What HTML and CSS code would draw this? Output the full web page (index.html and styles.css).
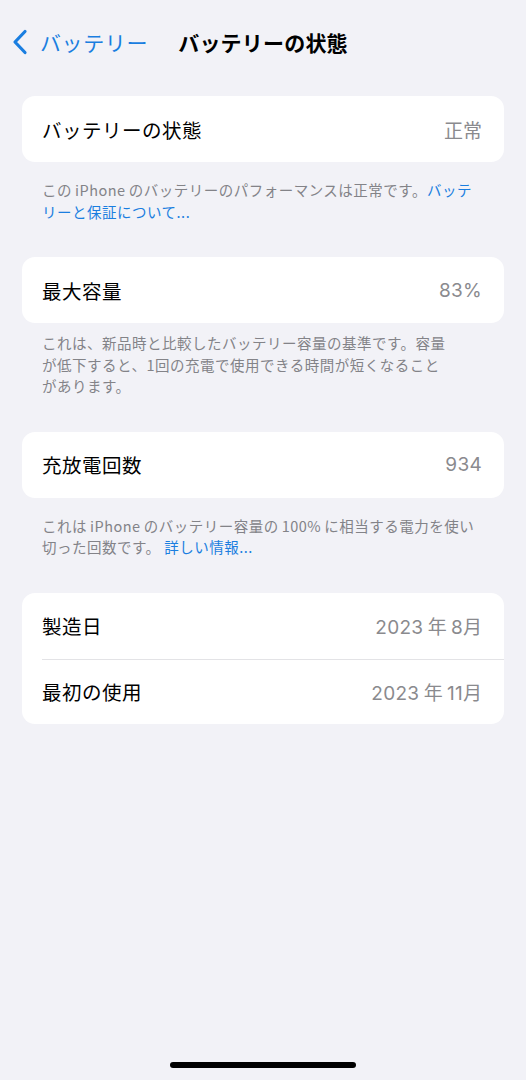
FILE: index.html
```html
<!DOCTYPE html>
<html lang="ja">
<head>
<meta charset="utf-8">
<title>バッテリーの状態</title>
<link rel="stylesheet" href="styles.css">
</head>
<body>
<div class="screen">
  <header class="nav">
    <a class="back" href="#">
      <svg class="chevron" width="16" height="26" viewBox="0 0 16 26" aria-hidden="true">
        <path d="M13 2.5 L3 13 L13 23.5" fill="none" stroke="currentColor" stroke-width="3.2" stroke-linecap="round" stroke-linejoin="round"/>
      </svg>
      <span class="back-label">バッテリー</span>
    </a>
    <h1 class="title">バッテリーの状態</h1>
    <span class="nav-spacer"></span>
  </header>

  <main class="content">
    <section class="group">
      <div class="card">
        <div class="row"><span class="label">バッテリーの状態</span><span class="value">正常</span></div>
      </div>
      <p class="footer">この<span class="latin">iPhone</span>のバッテリーのパフォーマンスは正常です。<a class="link" href="#">バッテ<br>リーと保証について...</a></p>
    </section>

    <section class="group">
      <div class="card">
        <div class="row"><span class="label">最大容量</span><span class="value num">83%</span></div>
      </div>
      <p class="footer footer-tight">これは、新品時と比較したバッテリー容量の基準です。容量<br>が低下すると、1回の充電で使用できる時間が短くなること<br>があります。</p>
    </section>

    <section class="group">
      <div class="card">
        <div class="row"><span class="label">充放電回数</span><span class="value num">934</span></div>
      </div>
      <p class="footer">これは<span class="latin">iPhone</span>のバッテリー容量の<span class="latin">100%</span>に相当する電力を使い<br>切った回数です。 <a class="link" href="#">詳しい情報...</a></p>
    </section>

    <section class="group">
      <div class="card">
        <div class="row"><span class="label">製造日</span><span class="value"><span class="num">2023</span> 年 <span class="num">8</span>月</span></div>
        <div class="row"><span class="label">最初の使用</span><span class="value"><span class="num">2023</span> 年 <span class="num">11</span>月</span></div>
      </div>
    </section>
  </main>

  <div class="home-bar"><span class="home-indicator"></span></div>
</div>
</body>
</html>
```

FILE: styles.css
```css
html, body {
  margin: 0;
  padding: 0;
}

body {
  background: #f2f2f7;
  font-family: "Noto Sans CJK JP", "Noto Sans", sans-serif;
  color: #000;
}

.screen {
  display: flex;
  flex-direction: column;
  height: 1080px;
}

/* navigation bar */
.nav {
  display: grid;
  grid-template-columns: 1fr auto 1fr;
  align-items: center;
  height: 84px;
}

.back {
  display: flex;
  align-items: center;
  gap: 12px;
  padding-left: 12px;
  color: #1a7ee0;
  text-decoration: none;
  font-size: 21px;
}

.chevron {
  display: block;
  color: #1a7ee0;
}

.back-label {
  line-height: 1;
  letter-spacing: 0.6px;
}

.title {
  margin: 0;
  font-size: 21px;
  font-weight: 700;
  letter-spacing: 0.2px;
  line-height: 1;
}

/* list groups */
.content {
  display: flex;
  flex-direction: column;
  gap: 35px;
  padding: 12px 22px 0;
  flex: 1;
}

.card {
  background: #fff;
  border-radius: 13px;
  overflow: hidden;
}

.row {
  display: flex;
  align-items: center;
  justify-content: space-between;
  height: 66px;
  padding: 0 22px 0 20px;
  position: relative;
}

.row + .row::before {
  content: "";
  position: absolute;
  top: 0;
  left: 20px;
  right: 0;
  height: 1px;
  background: #e3e3e6;
}

.row + .row {
  height: 65px;
}

.label {
  font-size: 19.5px;
  letter-spacing: 0.5px;
}

.value {
  font-size: 19px;
  color: #8a8a8e;
}

.num {
  font-family: Inter, "Noto Sans", sans-serif;
  font-size: 19px;
  letter-spacing: 0.3px;
}

.footer {
  margin: 0;
  padding: 17px 20px 0;
  font-size: 14.5px;
  line-height: 21.5px;
  color: #838388;
  letter-spacing: 0.5px;
}

.footer-tight {
  padding-top: 9px;
}

.latin {
  margin: 0 3px;
}

.link {
  color: #1a7ee0;
  text-decoration: none;
}

/* home indicator */
.home-bar {
  display: flex;
  justify-content: center;
  padding-bottom: 12px;
}

.home-indicator {
  width: 186px;
  height: 6px;
  border-radius: 3px;
  background: #000;
}
```
